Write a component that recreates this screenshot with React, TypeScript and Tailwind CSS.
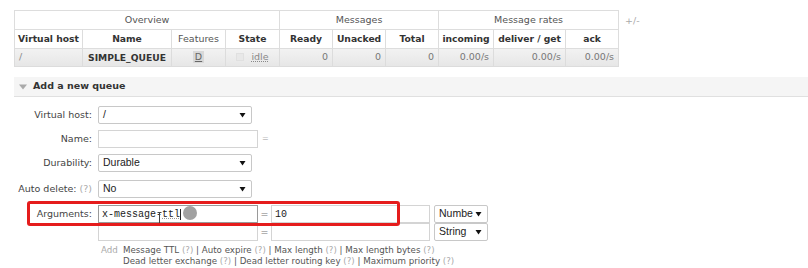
import React from "react";

const Arrow = () => (
  <svg width="7" height="6" viewBox="0 0 7 6" className="shrink-0">
    <path d="M0.5 1 L6.5 1 L3.5 5.5 Z" fill="#111" />
  </svg>
);

function Select({ value, w }: { value: string; w: string }) {
  return (
    <div
      className={`${w} h-[18px] border border-[#c8c8c8] rounded-[2px] bg-white flex items-center justify-between pl-[4px] pr-[5px] font-['Liberation_Sans',sans-serif] text-[10.5px] text-[#222]`}
    >
      <span className="whitespace-nowrap">{value}</span>
      <Arrow />
    </div>
  );
}

function Help() {
  return <span className="text-[#aaa]">(?)</span>;
}

export default function App() {
  const th2 = "border border-[#ddd] font-bold text-[#333] text-center text-[9.2px]";
  const td = "border border-[#dcdcdc] text-right pr-[4px] text-[#777]";
  return (
    <div className="w-[808px] h-[268px] bg-white relative overflow-hidden font-['DejaVu_Sans',sans-serif] text-[9.5px] text-[#333]">
      {/* Overview table */}
      <div className="pl-[14px] pt-[10px] flex items-start">
        <table className="table-fixed border-collapse border border-[#ddd] w-[604px]">
          <colgroup>
            <col className="w-[68px]" />
            <col className="w-[89px]" />
            <col className="w-[54px]" />
            <col className="w-[54px]" />
            <col className="w-[53px]" />
            <col className="w-[53px]" />
            <col className="w-[53px]" />
            <col className="w-[55px]" />
            <col className="w-[72px]" />
            <col className="w-[53px]" />
          </colgroup>
          <thead>
            <tr className="h-[19px]">
              <th colSpan={4} className="border border-[#ddd] font-normal text-[#555] text-center">Overview</th>
              <th colSpan={3} className="border border-[#ddd] font-normal text-[#555] text-center">Messages</th>
              <th colSpan={3} className="border border-[#ddd] font-normal text-[#555] text-center">Message rates</th>
            </tr>
            <tr className="h-[19px]">
              <th className={th2}>Virtual host</th>
              <th className={th2}>Name</th>
              <th className="border border-[#ddd] font-normal text-[#555] text-center">Features</th>
              <th className={th2}>State</th>
              <th className={th2}>Ready</th>
              <th className={th2}>Unacked</th>
              <th className={th2}>Total</th>
              <th className={th2}>incoming</th>
              <th className={th2}>deliver / get</th>
              <th className={th2}>ack</th>
            </tr>
          </thead>
          <tbody>
            <tr className="h-[18px] bg-gradient-to-b from-[#f2f2f2] to-[#e6e6e6]">
              <td className="border border-[#dcdcdc] text-left pl-[4px] text-[#888]">/</td>
              <td className="border border-[#dcdcdc] text-center font-bold text-[#333] text-[9.2px]">SIMPLE_QUEUE</td>
              <td className="border border-[#dcdcdc] text-center">
                <span className="inline-block bg-[#d8d8d8] px-[2px] leading-[12px] text-[#666] underline">D</span>
              </td>
              <td className="border border-[#dcdcdc] text-center">
                <span className="inline-flex items-center gap-[7px]">
                  <span className="inline-block w-[8px] h-[8px] bg-[#e8e8e8] border border-[#e0e0e0]" />
                  <span className="text-[#888] underline decoration-dotted">idle</span>
                </span>
              </td>
              <td className={td}>0</td>
              <td className={td}>0</td>
              <td className={td}>0</td>
              <td className={td}>0.00/s</td>
              <td className={td}>0.00/s</td>
              <td className={td}>0.00/s</td>
            </tr>
          </tbody>
        </table>
        <span className="ml-[6px] mt-[4px] text-[#aaa]">+/-</span>
      </div>

      {/* Add a new queue bar */}
      <div className="mt-[10px] ml-[14px] h-[20px] bg-[#f5f5f5] border-b border-[#e0e0e0] flex items-center">
        <svg width="8" height="6" viewBox="0 0 8 6" className="ml-[5px]">
          <path d="M0 0.5 L8 0.5 L4 5.5 Z" fill="#aaa" />
        </svg>
        <span className="ml-[6px] font-bold text-[#333]">Add a new queue</span>
      </div>

      {/* Form */}
      <div className="flex flex-col mt-[9px]">
        <div className="flex items-center h-[18px]">
          <div className="w-[92px] text-right text-[#444]">Virtual host:</div>
          <div className="ml-[6px]"><Select value="/" w="w-[154px]" /></div>
        </div>
        <div className="flex items-center h-[18px] mt-[6px]">
          <div className="w-[92px] text-right text-[#444]">Name:</div>
          <div className="ml-[6px] w-[160px] h-[18px] border border-[#d4d4d4] bg-white" />
          <span className="ml-[4px] text-[#bbb] text-[8px]">=</span>
        </div>
        <div className="flex items-center h-[18px] mt-[6px]">
          <div className="w-[92px] text-right text-[#444]">Durability:</div>
          <div className="ml-[6px]"><Select value="Durable" w="w-[154px]" /></div>
        </div>
        <div className="flex items-center h-[18px] mt-[8px]">
          <div className="w-[92px] text-right text-[#444]">Auto delete: <Help /></div>
          <div className="ml-[6px]"><Select value="No" w="w-[154px]" /></div>
        </div>

        {/* Arguments */}
        <div className="flex items-center h-[18px] mt-[7px]">
          <div className="w-[92px] text-right text-[#444]">Arguments:</div>
          <div className="ml-[6px] w-[160px] h-[18px] border border-[#9a9a9a] bg-white flex items-center pl-[3px] font-['Liberation_Mono',monospace] text-[10px] text-[#222] relative">
            <span>x-message-</span>
            <span className="underline decoration-dotted decoration-[#999]">ttl</span>
            <span className="w-[1px] h-[11px] bg-[#222]" />
            <svg width="5" height="12" viewBox="0 0 5 12" className="absolute left-[58px] top-[6px]">
              <path d="M0.5 0.5 H4.5 M2.5 0.5 V11.5 M0.5 11.5 H4.5" stroke="#444" strokeWidth="1" fill="none" />
            </svg>
          </div>
          <div className="w-[13px] text-center text-[#777]">=</div>
          <div className="w-[159px] h-[18px] border border-[#d4d4d4] bg-white flex items-center pl-[3px] font-['Liberation_Mono',monospace] text-[10px] text-[#222]">10</div>
          <div className="ml-[4px]"><Select value="Numbe" w="w-[54px]" /></div>
        </div>
        <div className="flex items-center h-[18px] mt-0">
          <div className="w-[92px]" />
          <div className="ml-[6px] w-[160px] h-[18px] border border-[#d4d4d4] bg-white" />
          <div className="w-[13px] text-center text-[#777]">=</div>
          <div className="w-[159px] h-[18px] border border-[#d4d4d4] bg-white" />
          <div className="ml-[4px]"><Select value="String" w="w-[54px]" /></div>
        </div>

        {/* Add helpers */}
        <div className="flex mt-[4px] text-[8.7px] leading-[11px]">
          <div className="w-[101px]" />
          <div className="w-[22px] text-[#aaa]">Add</div>
          <div className="text-[#555]">
            <div>
              Message TTL <Help /> | Auto expire <Help /> | Max length <Help /> | Max length bytes <Help />
            </div>
            <div>
              Dead letter exchange <Help /> | Dead letter routing key <Help /> | Maximum priority <Help />
            </div>
          </div>
        </div>
      </div>

      {/* Annotation overlays */}
      <div className="absolute left-[27px] top-[201px] w-[373px] h-[25px] border-[3px] border-[#e51c1c] rounded-[3px] pointer-events-none" />
      <div className="absolute left-[183px] top-[206px] w-[14px] h-[14px] rounded-full bg-[#8a8a8a]/80" />
    </div>
  );
}
